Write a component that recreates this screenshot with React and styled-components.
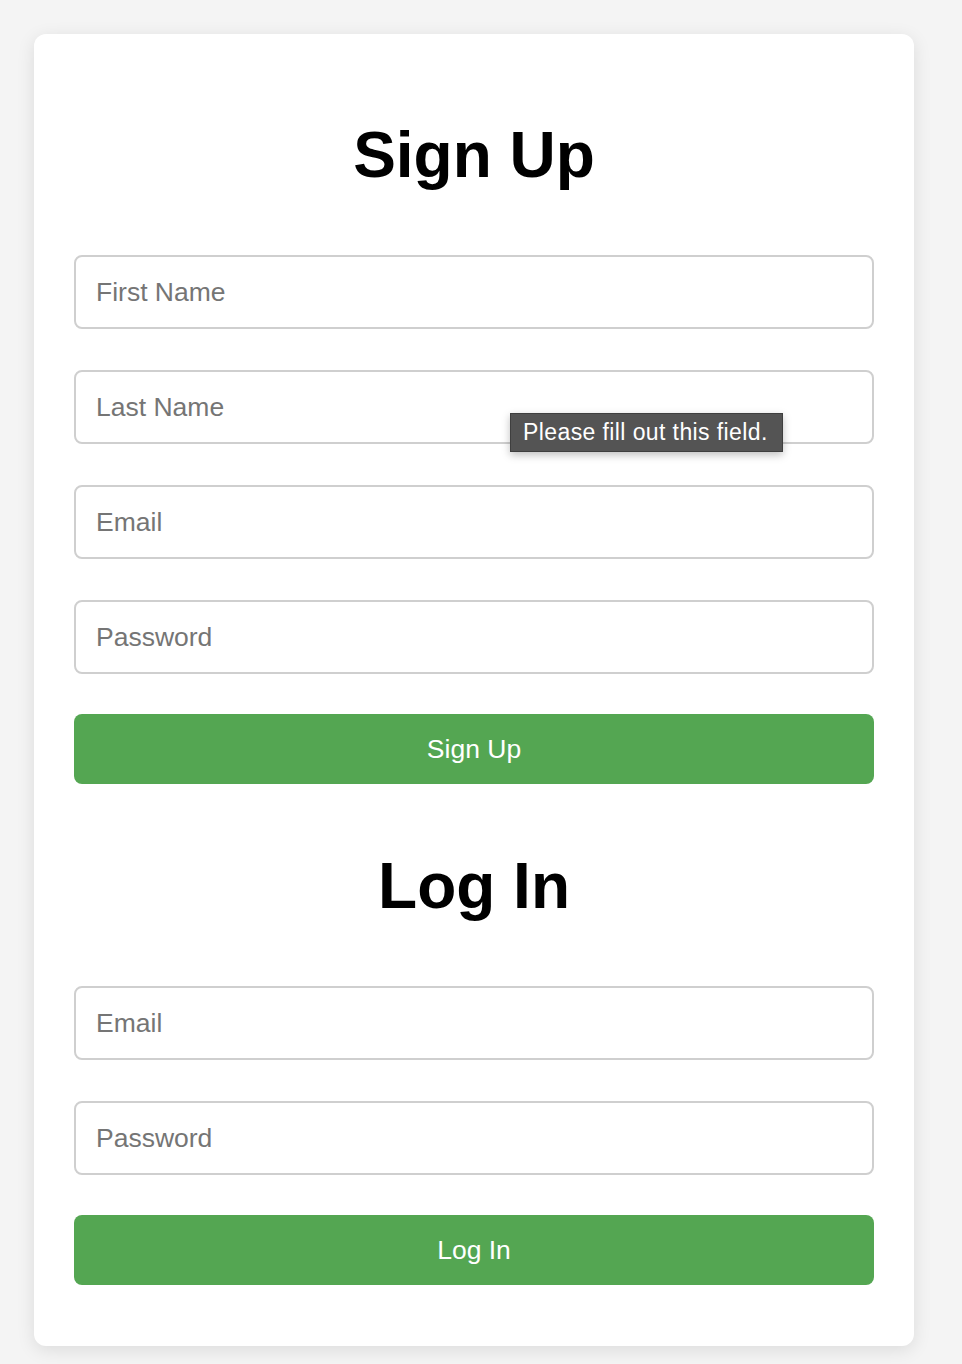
import React from 'react';
import styled, { createGlobalStyle } from 'styled-components';

const GlobalStyle = createGlobalStyle`
  body {
    margin: 0;
    background: #f4f4f4;
    font-family: "Liberation Sans", Arial, sans-serif;
  }
`;

const Page = styled.div`
  padding: 34px;
  min-height: 1364px;
  box-sizing: border-box;
`;

const Card = styled.div`
  width: 880px;
  box-sizing: border-box;
  background: #fff;
  border-radius: 12px;
  box-shadow: 0 4px 18px rgba(0, 0, 0, 0.1);
  padding: 40px 40px 61px;
`;

const Title = styled.h2`
  margin: ${p => p.$top}px 0 63px;
  font-size: 64px;
  line-height: 74px;
  font-weight: 700;
  text-align: center;
  color: #000;
`;

const Form = styled.form`
  display: flex;
  flex-direction: column;
  gap: 41px;
`;

const Field = styled.div`
  position: relative;
`;

const Input = styled.input`
  display: block;
  width: 100%;
  height: 74px;
  box-sizing: border-box;
  padding: 0 20px;
  border: 2px solid #cfcfcf;
  border-radius: 8px;
  font-family: inherit;
  font-size: 26.5px;
  color: #222;
  outline: none;
  &::placeholder {
    color: #757575;
  }
`;

const Button = styled.button`
  height: 70px;
  margin-top: -1px;
  border: none;
  border-radius: 8px;
  background: #54a652;
  color: #fff;
  font-family: inherit;
  font-size: 26.5px;
  cursor: pointer;
`;

const Tooltip = styled.div`
  position: absolute;
  left: 436px;
  top: 43px;
  padding: 0 14px 0 12px;
  height: 37px;
  display: flex;
  align-items: center;
  background: #545454;
  border: 1px solid #3f3f3f;
  color: #fff;
  font-size: 23px;
  letter-spacing: 0.4px;
  white-space: nowrap;
  box-shadow: 0 3px 8px rgba(0, 0, 0, 0.25);
`;

export default function App() {
  return (
    <>
      <GlobalStyle />
      <Page>
        <Card>
          <Title $top={44}>Sign Up</Title>
          <Form onSubmit={e => e.preventDefault()}>
            <Field><Input type="text" placeholder="First Name" /></Field>
            <Field>
              <Input type="text" placeholder="Last Name" />
              <Tooltip>Please fill out this field.</Tooltip>
            </Field>
            <Field><Input type="email" placeholder="Email" /></Field>
            <Field><Input type="password" placeholder="Password" /></Field>
            <Button type="submit">Sign Up</Button>
          </Form>

          <Title $top={65}>Log In</Title>
          <Form onSubmit={e => e.preventDefault()}>
            <Field><Input type="email" placeholder="Email" /></Field>
            <Field><Input type="password" placeholder="Password" /></Field>
            <Button type="submit">Log In</Button>
          </Form>
        </Card>
      </Page>
    </>
  );
}
